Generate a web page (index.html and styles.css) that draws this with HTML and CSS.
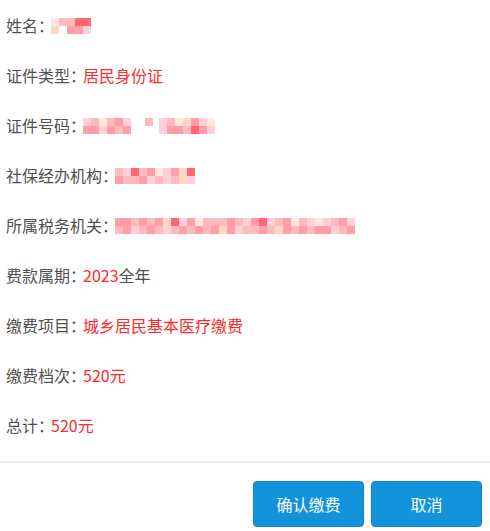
FILE: index.html
```html
<!DOCTYPE html>
<html lang="zh-CN">
<head>
    <meta charset="UTF-8">
    <meta name="viewport" content="width=device-width, initial-scale=1.0">
    <title>缴费确认</title>
    <link rel="stylesheet" href="styles.css">
</head>
<body>
    <div class="info">
        <div class="row">姓名：<span class="mosaic"><i class="a"></i><i class="f"></i><i class="b"></i><i></i><i class="b"></i><i class="e"></i><i class="c"></i><i class="e"></i><i class="c"></i><i class="d"></i></span></div>
        <div class="row">证件类型：<span class="value">居民身份证</span></div>
        <div class="row">证件号码：<span class="mosaic"><i class="d"></i><i class="e"></i><i class="b"></i><i class="e"></i><i class="a"></i><i class="d"></i><i class="b"></i><i class="e"></i><i class="e"></i><i class="b"></i><i class="d"></i><i class="e"></i><i></i><i></i></span><span class="mosaic gap"><i class="b"></i><i></i></span><span class="mosaic gap"><i class="d"></i><i class="d"></i><i class="b"></i><i class="e"></i><i class="a"></i><i class="e"></i><i class="f"></i><i class="b"></i><i class="e"></i><i class="c"></i><i class="d"></i><i class="e"></i><i class="a"></i><i class="d"></i></span></div>
        <div class="row">社保经办机构：<span class="mosaic"><i class="b"></i><i class="e"></i><i class="d"></i><i class="b"></i><i class="c"></i><i class="b"></i><i class="b"></i><i class="e"></i><i class="e"></i><i class="d"></i><i class="a"></i><i class="b"></i><i class="d"></i><i class="d"></i><i class="e"></i><i class="b"></i><i class="f"></i><i class="f"></i><i class="c"></i><i class="d"></i></span></div>
        <div class="row">所属税务机关：<span class="mosaic"><i class="e"></i><i class="b"></i><i class="e"></i><i class="e"></i><i class="b"></i><i class="d"></i><i class="e"></i><i class="b"></i><i class="b"></i><i class="e"></i><i class="e"></i><i class="b"></i><i class="f"></i><i class="d"></i><i class="c"></i><i class="b"></i><i class="d"></i><i class="e"></i><i class="e"></i><i class="b"></i><i class="a"></i><i class="e"></i><i class="b"></i><i class="b"></i><i class="b"></i><i class="e"></i><i class="b"></i><i class="f"></i><i class="e"></i><i class="e"></i><i class="b"></i><i class="d"></i><i class="d"></i><i class="b"></i><i class="e"></i><i class="b"></i><i class="c"></i><i class="e"></i><i class="d"></i><i class="b"></i><i class="b"></i><i class="f"></i><i class="e"></i><i class="e"></i><i class="a"></i><i class="b"></i><i class="b"></i><i class="e"></i><i class="d"></i><i class="b"></i><i class="a"></i><i class="e"></i><i class="d"></i><i class="e"></i><i class="b"></i><i class="d"></i><i class="e"></i><i class="b"></i><i class="d"></i><i class="e"></i></span></div>
        <div class="row">费款属期：<span class="value">2023</span>全年</div>
        <div class="row">缴费项目：<span class="value">城乡居民基本医疗缴费</span></div>
        <div class="row">缴费档次：<span class="value">520元</span></div>
        <div class="row">总计：<span class="value">520元</span></div>
    </div>

    <div class="footer">
        <button class="btn">确认缴费</button>
        <button class="btn">取消</button>
    </div>
</body>
</html>
```

FILE: styles.css
```css
body {
    margin: 0;
    background-color: #fff;
    font-family: "Noto Sans CJK SC", "Liberation Sans", sans-serif;
    color: #505050;
}
.info {
    padding-left: 6px;
}
.row {
    height: 50px;
    line-height: 50px;
    font-size: 16px;
}
/* the colon is drawn narrower in the original font */
.value {
    color: #ff2a2a;
    margin-left: -3px;
}
/* pixelated (blurred) values */
.mosaic {
    display: inline-grid;
    grid-template-rows: 8px 8px;
    grid-auto-flow: column;
    grid-auto-columns: 8px;
    vertical-align: middle;
    margin-top: -4px;
    margin-left: -3px;
    opacity: 0.9;
}
.mosaic.gap {
    margin-left: 6px;
}
.mosaic i { display: block; }
.mosaic .a { background-color: #ffe6d6; }
.mosaic .b { background-color: #ffb3b8; }
.mosaic .c { background-color: #ff5566; }
.mosaic .d { background-color: #ffccd4; }
.mosaic .e { background-color: #ff949d; }
.mosaic .f { background-color: #ffd4be; }
.footer {
    margin-top: 11px;
    border-top: 2px solid #eeeeee;
    padding: 18px 8px 0 0;
    display: flex;
    justify-content: flex-end;
    gap: 7px;
}
.btn {
    width: 111px;
    height: 46px;
    background-color: #1393db;
    border: 1px solid #0e84c8;
    border-radius: 4px;
    color: #fff;
    font-family: "Noto Sans CJK SC", sans-serif;
    font-size: 16px;
    cursor: pointer;
}
```
